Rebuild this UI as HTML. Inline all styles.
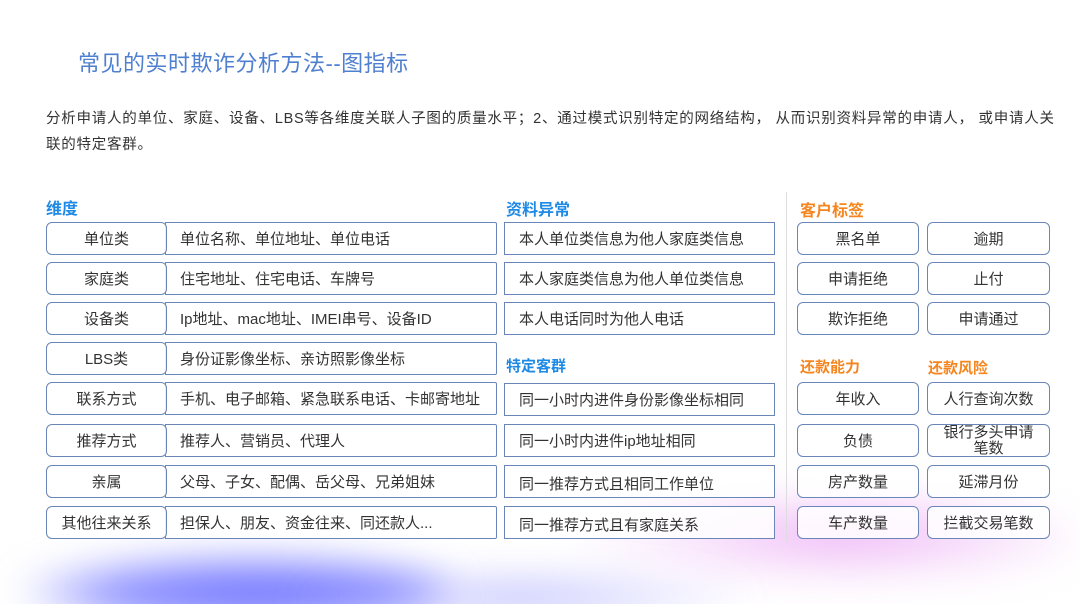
<!DOCTYPE html>
<html><head><meta charset="utf-8"><style>
*{margin:0;padding:0;box-sizing:border-box}
html,body{width:1080px;height:604px;overflow:hidden}
body{background:#fff;position:relative;font-family:"Liberation Sans","Noto Sans CJK SC",sans-serif;color:#333}
.a{position:absolute}
.blob{position:absolute;border-radius:50%;filter:blur(18px)}
.t{left:78px;top:46px;font-size:22px;color:#4f7fcf;letter-spacing:0.5px}
.p{left:46px;top:106px;font-size:14.5px;line-height:26px;color:#333;white-space:nowrap;letter-spacing:0.75px}
.h{font-size:16px;font-weight:bold}
.bl{color:#1e8ae6}.or{color:#f5861f}
.bx{position:absolute;border:1.5px solid #6a85b8;background:rgba(255,255,255,0.85);font-size:15px;height:33px;line-height:34px;color:#333;white-space:nowrap;overflow:hidden}
.lb{border-radius:6px;text-align:center;width:121px;left:46px;z-index:2}
.dt{left:165px;width:332px;padding-left:14px;border-radius:0 2px 2px 0}
.md{left:504px;width:271px;padding-left:14px}
.r1{left:797px;width:122px;border-radius:6px;text-align:center}
.r2{left:927px;width:123px;border-radius:6px;text-align:center}
</style></head><body>
<div class="blob" style="left:20px;top:555px;width:430px;height:70px;background:radial-gradient(ellipse at 55% 55%,#6f73ff 0%,#8e91ff 45%,rgba(200,200,255,0) 75%)"></div>
<div class="blob" style="left:280px;top:570px;width:480px;height:55px;background:radial-gradient(ellipse,rgba(140,140,255,0.6),rgba(220,220,255,0) 70%)"></div>
<div class="blob" style="left:560px;top:490px;width:520px;height:100px;background:radial-gradient(ellipse at 55% 45%,rgba(236,170,245,0.85),rgba(245,215,250,0.4) 50%,rgba(255,255,255,0) 72%)"></div>

<div class="a t">常见的实时欺诈分析方法--图指标</div>
<div class="a p">分析申请人的单位、家庭、设备、LBS等各维度关联人子图的质量水平；2、通过模式识别特定的网络结构， 从而识别资料异常的申请人， 或申请人关<br>联的特定客群。</div>

<div class="a h bl" style="left:46px;top:195px">维度</div>
<div class="a h bl" style="left:506px;top:196px">资料异常</div>
<div class="a h bl" style="left:506px;top:355px;font-size:15px">特定客群</div>
<div class="a h or" style="left:800px;top:197px">客户标签</div>
<div class="a h or" style="left:800px;top:356px;font-size:15px">还款能力</div>
<div class="a h or" style="left:928px;top:357px;font-size:15px">还款风险</div>
<div class="a" style="left:786px;top:192px;width:1px;height:350px;background:#ddd"></div>

<div class="bx lb" style="top:222px">单位类</div><div class="bx dt" style="top:222px">单位名称、单位地址、单位电话</div>
<div class="bx lb" style="top:262px">家庭类</div><div class="bx dt" style="top:262px">住宅地址、住宅电话、车牌号</div>
<div class="bx lb" style="top:302px">设备类</div><div class="bx dt" style="top:302px">Ip地址、mac地址、IMEI串号、设备ID</div>
<div class="bx lb" style="top:342px">LBS类</div><div class="bx dt" style="top:342px">身份证影像坐标、亲访照影像坐标</div>
<div class="bx lb" style="top:382px">联系方式</div><div class="bx dt" style="top:382px">手机、电子邮箱、紧急联系电话、卡邮寄地址</div>
<div class="bx lb" style="top:424px">推荐方式</div><div class="bx dt" style="top:424px">推荐人、营销员、代理人</div>
<div class="bx lb" style="top:465px">亲属</div><div class="bx dt" style="top:465px">父母、子女、配偶、岳父母、兄弟姐妹</div>
<div class="bx lb" style="top:506px">其他往来关系</div><div class="bx dt" style="top:506px">担保人、朋友、资金往来、同还款人...</div>

<div class="bx md" style="top:222px">本人单位类信息为他人家庭类信息</div>
<div class="bx md" style="top:262px">本人家庭类信息为他人单位类信息</div>
<div class="bx md" style="top:302px">本人电话同时为他人电话</div>
<div class="bx md" style="top:383px">同一小时内进件身份影像坐标相同</div>
<div class="bx md" style="top:424px">同一小时内进件ip地址相同</div>
<div class="bx md" style="top:465px;line-height:38px">同一推荐方式且相同工作单位</div>
<div class="bx md" style="top:506px;line-height:38px">同一推荐方式且有家庭关系</div>

<div class="bx r1" style="top:222px">黑名单</div><div class="bx r2" style="top:222px">逾期</div>
<div class="bx r1" style="top:262px">申请拒绝</div><div class="bx r2" style="top:262px">止付</div>
<div class="bx r1" style="top:302px">欺诈拒绝</div><div class="bx r2" style="top:302px">申请通过</div>
<div class="bx r1" style="top:382px">年收入</div><div class="bx r2" style="top:382px">人行查询次数</div>
<div class="bx r1" style="top:424px">负债</div><div class="bx r2" style="top:424px;line-height:16px;white-space:normal;padding:0 10px">银行多头申请笔数</div>
<div class="bx r1" style="top:465px">房产数量</div><div class="bx r2" style="top:465px">延滞月份</div>
<div class="bx r1" style="top:506px">车产数量</div><div class="bx r2" style="top:506px">拦截交易笔数</div>
</body></html>
